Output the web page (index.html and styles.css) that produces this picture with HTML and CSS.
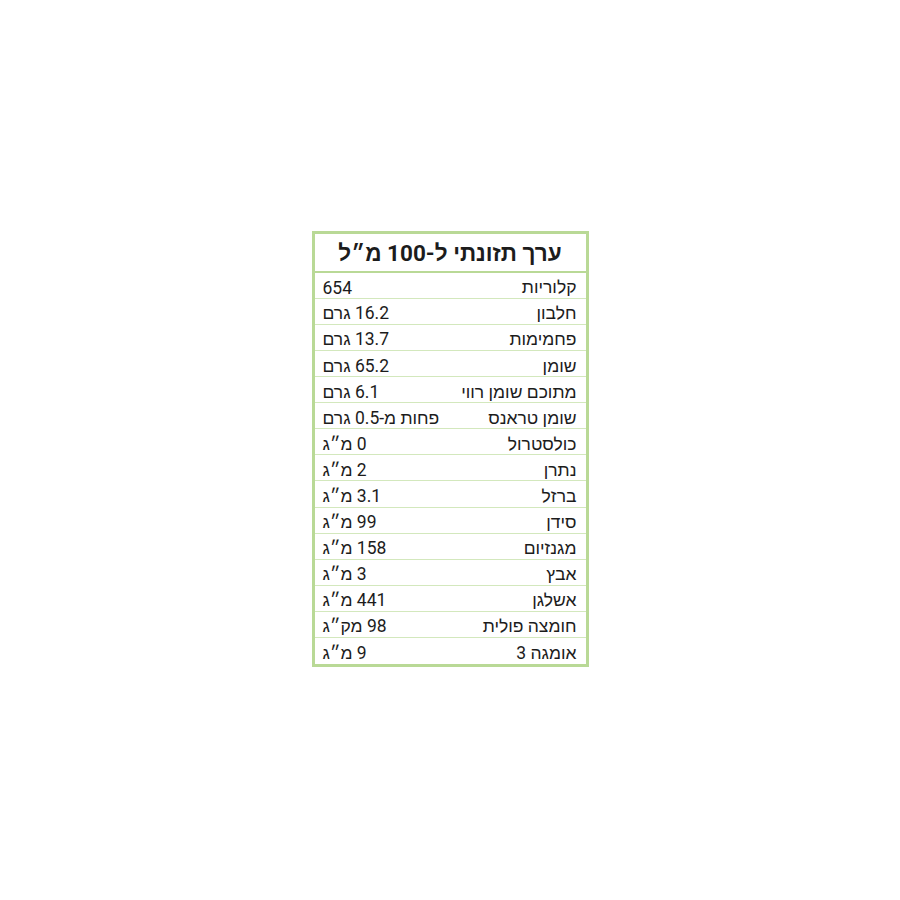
FILE: index.html
```html
<!DOCTYPE html>
<html lang="he" dir="rtl">
<head>
<meta charset="utf-8">
<link rel="stylesheet" href="styles.css">
</head>
<body>
<div class="page">
  <div class="table">
    <div class="head">ערך תזונתי ל-100 מ״ל</div>
    <div class="row"><span class="name">קלוריות</span><span class="val">654</span></div>
    <div class="row"><span class="name">חלבון</span><span class="val">16.2 גרם</span></div>
    <div class="row"><span class="name">פחמימות</span><span class="val">13.7 גרם</span></div>
    <div class="row"><span class="name">שומן</span><span class="val">65.2 גרם</span></div>
    <div class="row"><span class="name">מתוכם שומן רווי</span><span class="val">6.1 גרם</span></div>
    <div class="row"><span class="name">שומן טראנס</span><span class="val">פחות מ-0.5 גרם</span></div>
    <div class="row"><span class="name">כולסטרול</span><span class="val">0 מ״ג</span></div>
    <div class="row"><span class="name">נתרן</span><span class="val">2 מ״ג</span></div>
    <div class="row"><span class="name">ברזל</span><span class="val">3.1 מ״ג</span></div>
    <div class="row"><span class="name">סידן</span><span class="val">99 מ״ג</span></div>
    <div class="row"><span class="name">מגנזיום</span><span class="val">158 מ״ג</span></div>
    <div class="row"><span class="name">אבץ</span><span class="val">3 מ״ג</span></div>
    <div class="row"><span class="name">אשלגן</span><span class="val">441 מ״ג</span></div>
    <div class="row"><span class="name">חומצה פולית</span><span class="val">98 מק״ג</span></div>
    <div class="row last"><span class="name">אומגה 3</span><span class="val">9 מ״ג</span></div>
  </div>
</div>
</body>
</html>
```

FILE: styles.css
```css
html, body {
  margin: 0;
  padding: 0;
  background: #ffffff;
}
body {
  font-family: Roboto, "Liberation Sans", "DejaVu Sans", sans-serif;
  color: #1c1c1c;
}
.page {
  width: 900px;
  height: 900px;
  padding-top: 231px;
  box-sizing: border-box;
  display: flex;
  justify-content: center;
}
.table {
  width: 277px;
  height: 436px;
  box-sizing: border-box;
  border: 3px solid #b9d996;
  display: flex;
  flex-direction: column;
}
.head {
  height: 39px;
  border-bottom: 2px solid #b9d996;
  display: flex;
  align-items: center;
  justify-content: center;
  font-weight: bold;
  font-size: 22.5px;
  padding: 3px 0 0 0;
  box-sizing: border-box;
}
.row {
  height: 26.1px;
  box-sizing: border-box;
  border-bottom: 1px solid #d3e8bd;
  display: flex;
  align-items: center;
  justify-content: space-between;
  padding: 5px 9px 0 8px;
  font-size: 17.5px;
}
.row.last {
  border-bottom: none;
}
.val {
  direction: rtl;
  text-align: left;
}
```
